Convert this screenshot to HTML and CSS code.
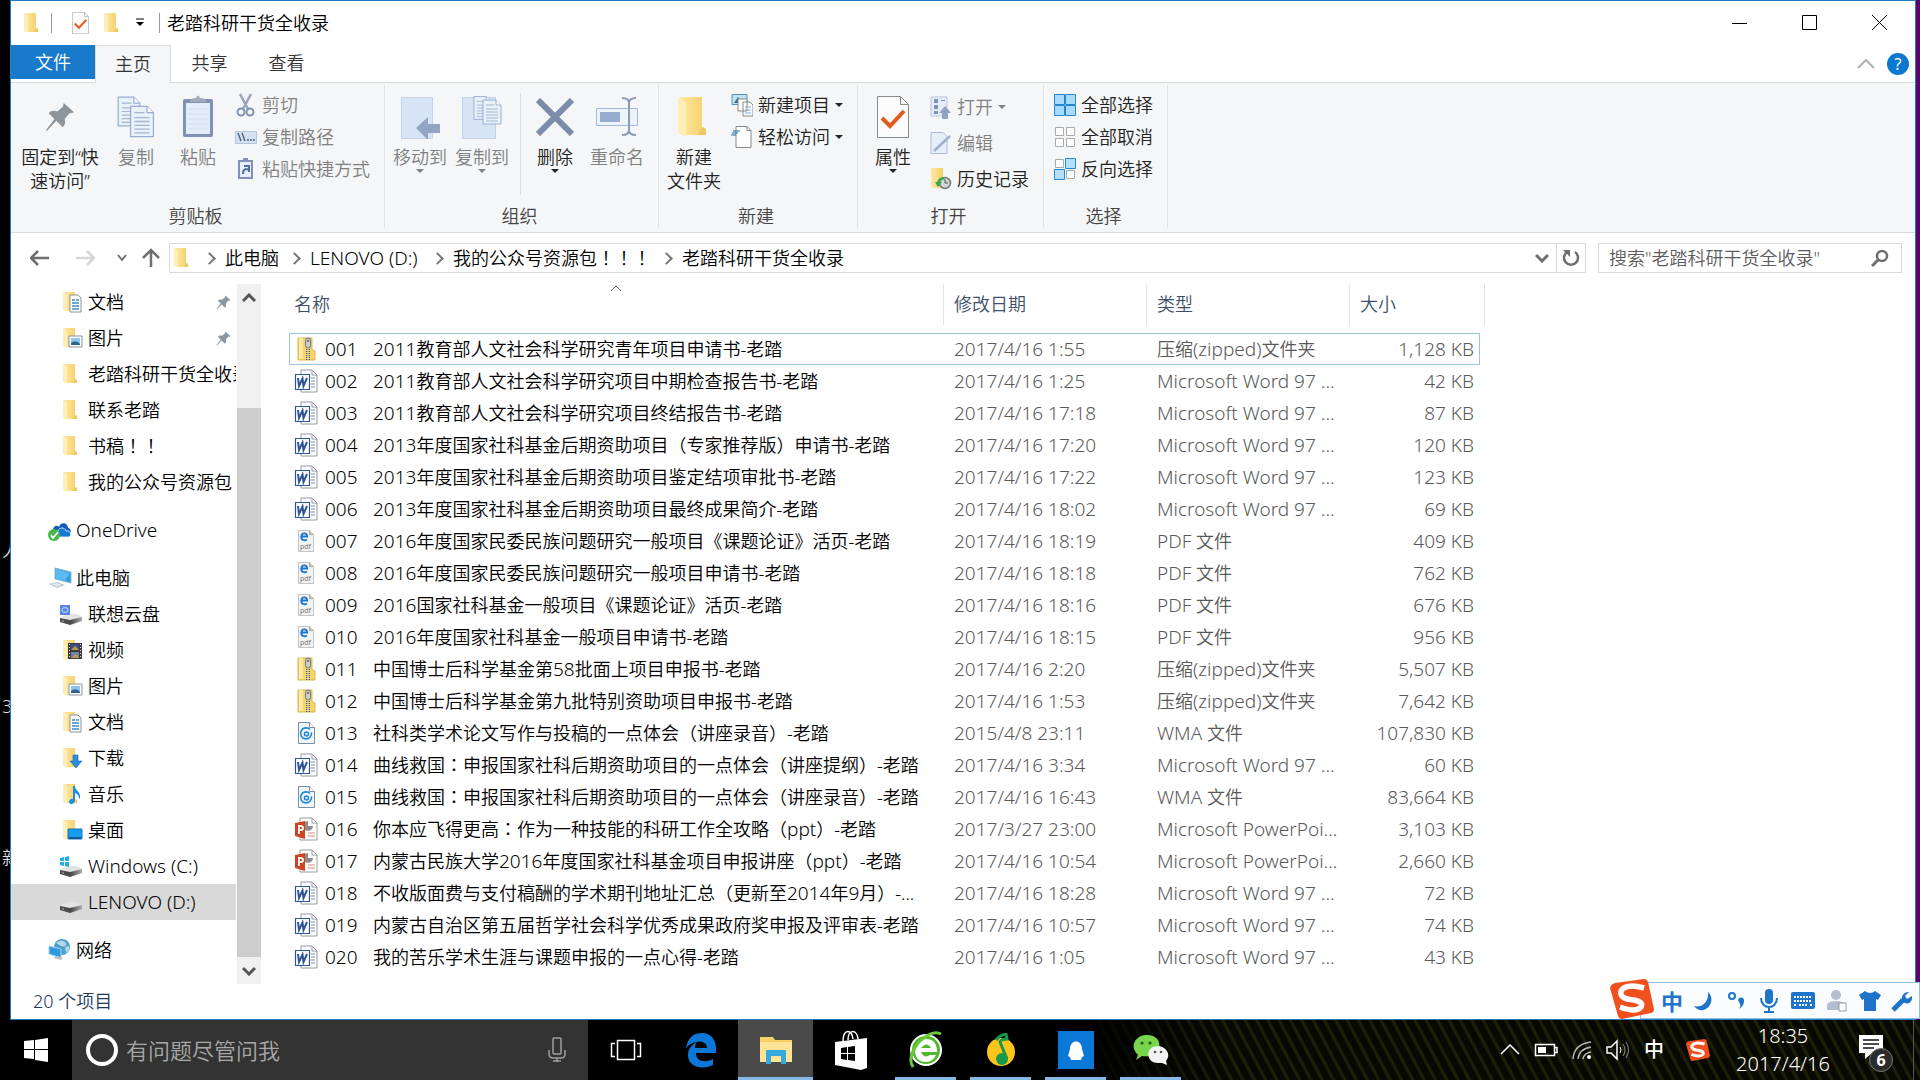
FILE: index.html
```html
<!DOCTYPE html>
<html lang="zh-CN">
<head>
  <meta charset="UTF-8" />
  <meta name="viewport" content="width=device-width, initial-scale=1.0" />
  <title>老踏科研干货全收录</title>
  <link rel="stylesheet" href="styles.css">
</head>
<body>
  <!-- Shared icons -->
  <svg class="defs" aria-hidden="true">
    <defs>
      <linearGradient id="gold" x1="0" x2="1"><stop offset="0" stop-color="#ffe9a6"/><stop offset="1" stop-color="#f5cf66"/></linearGradient>
      <linearGradient id="metal" x1="0" x2="1"><stop offset="0" stop-color="#444"/><stop offset="1" stop-color="#aaa"/></linearGradient>
    </defs>
    <symbol id="folder" viewBox="0 0 24 24">
      <path d="M5 2h11v15l2 1v3H7z" fill="url(#gold)"/>
      <path d="M4 2l4 3v17l-4-2z" fill="#ffeeb5"/>
      <path d="M16 17l2 1v3h-4z" fill="#efc95f"/>
    </symbol>
    <symbol id="folder-doc" viewBox="0 0 24 24">
      <use href="#folder"/>
      <path d="M11 5h8l3 3v14H11z" fill="#fff" stroke="#8a939b"/>
      <path d="M13 10h3M13 13h7M13 16h7M13 19h7M17 10h3" stroke="#3b8fc9" stroke-width="1.4"/>
    </symbol>
    <symbol id="folder-pic" viewBox="0 0 24 24">
      <use href="#folder"/>
      <path d="M10 10h13v11H10z" fill="#fff" stroke="#8a939b"/>
      <path d="M12 12h9v7h-9z" fill="#8cc4ef"/><path d="M12 17q5-4 9 1v1h-9z" fill="#2f6286"/>
    </symbol>
    <symbol id="folder-video" viewBox="0 0 24 24">
      <use href="#folder"/>
      <path d="M9 5h14v16H9z" fill="#3c3c40"/><path d="M12 6h8v6h-8z" fill="#36528c"/><path d="M12 14h8v6h-8z" fill="#6d86a8"/>
      <path d="M12 12l4-4 4 4zM12 20l5-4 3 4z" fill="#c7964c"/>
      <path d="M10.500 6v15M21.500 6v15" stroke="#ddd" stroke-dasharray="1 2"/>
    </symbol>
    <symbol id="folder-down" viewBox="0 0 24 24">
      <use href="#folder"/>
      <path d="M14 9h5v6h4l-6 7-6-7h3z" fill="#2d8ddb" stroke="#1b6bb0" stroke-width=".6"/>
    </symbol>
    <symbol id="folder-music" viewBox="0 0 24 24">
      <use href="#folder"/>
      <path d="M14 4h2c0 5 6 5 5 12l-1 1c0-4-2-5-4-6v7c0 5-6 5-6 2s3-4 4-3z" fill="#1e8fe0"/>
    </symbol>
    <symbol id="folder-desk" viewBox="0 0 24 24">
      <use href="#folder"/>
      <path d="M9 11h14v10H9z" fill="#1a9bf0" stroke="#1679bd"/><path d="M10 20h12" stroke="#0e4775" stroke-width="1.500"/>
    </symbol>
    <symbol id="drive" viewBox="0 0 24 24">
      <path d="M1 16l7-4h10l5 3-12 5z" fill="#e3e3e3"/>
      <path d="M1 16l10 2v5L1 20z" fill="#4c4c4c"/><path d="M11 18l12-3v4l-12 4z" fill="url(#metal)"/>
      <circle cx="4" cy="19" r=".8" fill="#9ae6a0"/>
    </symbol>
    <symbol id="drive-win" viewBox="0 0 24 24">
      <use href="#drive"/>
      <path d="M1 4l4-1v4H1zM6 3l4-1v5H6zM1 8h4v4l-4-1zM6 8h4v5l-4-1z" fill="#1fb0e8"/>
    </symbol>
    <symbol id="drive-cloud" viewBox="0 0 24 24">
      <use href="#drive"/>
      <path d="M1 3h10v10H1z" fill="#5686e8"/><path d="M3 8a2 2 0 0 1 3-2 2 2 0 0 1 3 2 2 2 0 0 1-3 2 2 2 0 0 1-3-2z" fill="none" stroke="#cfe0ff"/>
    </symbol>
    <symbol id="pc" viewBox="0 0 24 24">
      <path d="M7 2l16 4v11L7 13z" fill="#2e9be0" stroke="#8fb9d6"/><path d="M8 3l14 4-5 8-9-2z" fill="#5bb8f0"/>
      <path d="M1 18l8-2 8 3-8 3z" fill="#b9c3ca"/><path d="M3 18l6-1 5 2-5 2z" fill="#e4e9ec"/>
    </symbol>
    <symbol id="onedrive" viewBox="0 0 24 24">
      <path d="M6 14c-3-5 3-8 5-5 2-6 9-4 9 1 3 0 4 5 1 6H8z" fill="#0f5fb8"/>
      <path d="M9 18c-3-1-2-5 1-5 1-4 7-4 8 0 5-1 6 5 3 6H11z" fill="#1679d4" stroke="#fff" stroke-width=".8"/>
      <circle cx="6" cy="17" r="6" fill="#45b649"/><path d="M3 17l2 3 5-6" fill="none" stroke="#fff" stroke-width="1.800"/>
    </symbol>
    <symbol id="network" viewBox="0 0 24 24">
      <circle cx="14" cy="9" r="8" fill="#4f9fcc"/><path d="M8 5q6-5 10 0 1 5-5 3zM17 9l4-1q1 5-3 7z" fill="#b5d6e6"/>
      <path d="M1 8l12 3v9L1 16z" fill="#2e9be0" stroke="#a9d3ee"/><path d="M5 20l8 2 2-2-6-2z" fill="#b9c3ca"/>
    </symbol>
    <symbol id="zip" viewBox="0 0 24 24">
      <path d="M4 1h14v12l3 1v9H4z" fill="#f6d568" stroke="#dcb54a"/><path d="M5 1h4v21H5z" fill="#ffe9a6"/>
      <path d="M14 10v13" stroke="#555" stroke-width="4" stroke-dasharray="1 1"/><path d="M14 10v13" stroke="#eee" stroke-width="1"/>
      <rect x="11.500" y="1" width="5" height="10" rx="2.500" fill="#c8ced3" stroke="#6c7378"/><circle cx="14" cy="4" r="1" fill="#555"/>
    </symbol>
    <symbol id="word" viewBox="0 0 24 24">
      <path d="M7 1h11l5 5v17H7z" fill="#fff" stroke="#9099a5"/><path d="M18 1v5h5" fill="none" stroke="#9099a5"/>
      <path d="M17 9h4M17 12h4M17 15h4M17 18h4" stroke="#7889a8"/>
      <path d="M1.500 5.500h14v15h-14z" fill="#fff" stroke="#2b579a" stroke-width="1.200"/>
      <path d="M4 9l1 8 3.500-7.500 1 7.500L13 9" fill="none" stroke="#2b579a" stroke-width="2"/>
    </symbol>
    <symbol id="ppt" viewBox="0 0 24 24">
      <path d="M6 1h12l5 5v17H6z" fill="#fff" stroke="#9c9c9c"/><path d="M18 1v5h5" fill="none" stroke="#9c9c9c"/>
      <path d="M14 4v5h5a5 5 0 1 1-5-5z" fill="#8f8f8f"/><path d="M14 16h7M14 19h7" stroke="#e0846c"/>
      <path d="M1 6l10-2v18L1 19z" fill="#d04423"/><path d="M5 17V9h2a2 2 0 0 1 0 4H5" fill="none" stroke="#fff" stroke-width="1.800"/>
    </symbol>
    <symbol id="pdf" viewBox="0 0 24 24">
      <path d="M4.500 1.500h11l4 4v17h-15z" fill="#f3f3f3" stroke="#c4c4c4"/><path d="M15.500 1.500v4h4" fill="#ccc" stroke="#aaa"/>
      <path d="M7.500 7.500h5.500c0-4-4.500-4-5.500-1-1 4 2 6 5.500 4" fill="none" stroke="#1976d2" stroke-width="2"/>
      <text x="6" y="20" font-size="7" font-weight="400" font-family="Noto Sans" fill="#777">pdf</text>
    </symbol>
    <symbol id="wma" viewBox="0 0 24 24">
      <path d="M4.500 1.500h11l5 5v16h-16z" fill="#eff8ff" stroke="#7d8c98"/><path d="M15.500 1.500v5h5" fill="#fff" stroke="#7d8c98"/>
      <path d="M16 8.500a5.500 5.500 0 1 0 1.500 3" fill="none" stroke="#1e88d8" stroke-width="1.600"/><circle cx="12.500" cy="13" r="2" fill="none" stroke="#1e88d8" stroke-width="1.600"/>
    </symbol>
    <symbol id="pin" viewBox="0 0 32 32">
      <path d="M20 1l11 10-3 1-2 0-5 6c1 4 0 7-2 9l-7-7L2 31l-1-1L10 18 4 12c2-3 6-3 9-2l6-5z" fill="currentColor"/>
    </symbol>
    <symbol id="page" viewBox="0 0 20 26">
      <path d="M1 1h13l5 5v19H1z" fill="#e9f1fb" stroke="#97aed2"/><path d="M14 1v5h5" fill="#fff" stroke="#97aed2"/>
      <path d="M4 6h8M4 10h12M4 13h12M4 16h12M4 19h12M4 22h12" stroke="#a3b5d0"/>
    </symbol>
    <symbol id="checkdoc" viewBox="0 0 32 42">
      <path d="M.500.500h23l8 8v33H.500z" fill="#fcfcfc" stroke="#8b8b8b"/><path d="M23.500.500v8h8" fill="none" stroke="#8b8b8b"/>
      <path d="M5 22l8 8 14-15" fill="none" stroke="#e35b1c" stroke-width="4"/>
    </symbol>
    <symbol id="sogou" viewBox="0 0 44 40">
      <path d="M5 4L34 0q3 0 4 3l6 27q0 3-3 4l-29 6q-3 0-4-3L0 9q1-4 5-5z" fill="#f0501e"/>
      <path d="M34 9Q16 4 11 12q-2 8 13 9 10 2 7 7-5 6-21 0" fill="none" stroke="#fff" stroke-width="5.500"/>
    </symbol>
  </svg>

  <div class="desktop">
    <span class="desk-text desk-text-1">人</span>
    <span class="desk-text desk-text-2">3</span>
    <span class="desk-text desk-text-3">新</span>

    <div class="window">
      <!-- Title bar -->
      <header class="titlebar">
        <svg class="ico"><use href="#folder"/></svg>
        <span class="bar"></span>
        <button class="quick"><svg width="17" height="22"><use href="#checkdoc"/></svg></button>
        <button class="quick"><svg class="ico"><use href="#folder"/></svg></button>
        <button class="quick more"><svg width="10" height="10" viewBox="0 0 10 10"><path d="M1 1h8" stroke="#000"/><path d="M1 4h8L5 8z"/></svg></button>
        <span class="bar"></span>
        <span class="title">老踏科研干货全收录</span>
        <div class="win-buttons">
          <button aria-label="最小化"><svg width="16" height="16"><path d="M0 8.500h15" stroke="#000"/></svg></button>
          <button aria-label="最大化"><svg width="16" height="16"><path d="M.500.500h14v14H.500z" fill="none" stroke="#000"/></svg></button>
          <button aria-label="关闭"><svg width="16" height="16"><path d="M0 0l15 15M15 0L0 15" stroke="#000"/></svg></button>
        </div>
      </header>

      <!-- Ribbon tabs -->
      <nav class="tabs">
        <button class="tab file">文件</button>
        <button class="tab active">主页</button>
        <button class="tab">共享</button>
        <button class="tab">查看</button>
        <div class="tabs-end">
          <svg width="18" height="10"><path d="M1 9l8-8 8 8" fill="none" stroke="#b0b0b0" stroke-width="2"/></svg>
          <button class="help">?</button>
        </div>
      </nav>

      <!-- Ribbon -->
      <section class="ribbon">
        <div class="group g-clipboard">
          <div class="group-body">
            <button class="big pin-button"><span class="pic"><svg class="pin-big"><use href="#pin"/></svg></span>固定到“快<br>速访问”</button>
            <button class="big off"><span class="pic"><svg width="38" height="44"><use href="#page" width="24" height="33" y="0"/><use href="#page" x="12" y="10" width="26" height="33"/></svg></span>复制</button>
            <button class="big off"><span class="pic"><svg width="32" height="44" viewBox="0 0 32 44"><rect x="1" y="4" width="30" height="38" rx="2" fill="#7f92b5"/><path d="M4 8h24v31H4z" fill="#e3edfa"/><path d="M6 14h20M6 19h20M6 24h20M6 29h20M6 34h20" stroke="#d0deef"/><path d="M8 7q0-4 6-4 2-5 4 0 6 0 6 4z" fill="#a3abb8"/></svg></span>粘贴</button>
            <div class="smalls">
              <button class="off"><svg width="22" height="24" viewBox="0 0 22 24"><path d="M5 1l8 15M16 1L8 16" stroke="#99a5b8" stroke-width="2.500"/><circle cx="6" cy="19" r="3.500" fill="none" stroke="#7f92b0" stroke-width="2"/><circle cx="15" cy="19" r="3.500" fill="none" stroke="#7f92b0" stroke-width="2"/></svg>剪切</button>
              <button class="off"><svg width="22" height="24" viewBox="0 0 22 24"><path d="M.500 6.500h21v12H.500z" fill="#d5e1f2" stroke="#b4c5de"/><path d="M3 8l3 8M7 8l3 8M12 15h2M15 15h2M18 15h2" stroke="#4d6180" stroke-width="1.400"/></svg>复制路径</button>
              <button class="off"><svg width="22" height="24" viewBox="0 0 22 24"><path d="M4 4h13v17H4z" fill="#e7effa" stroke="#8093b6" stroke-width="2"/><path d="M8 1h5v4H8z" fill="#8093b6"/><path d="M8 17c0-4 1-5 5-5M9 9h5v6" fill="none" stroke="#4f6d9d" stroke-width="2"/></svg>粘贴快捷方式</button>
            </div>
          </div>
          <div class="group-name">剪贴板</div>
        </div>

        <div class="group g-organize">
          <div class="group-body">
            <button class="big off"><span class="pic"><svg width="40" height="44"><path d="M1.500 2.500h31v41h-31z" fill="#d7e4f6" stroke="#c0d2ec"/><path d="M16 33l12-11v7h12v9H28v7z" fill="#93a5c2"/></svg></span>移动到<i class="drop"></i></button>
            <button class="big off"><span class="pic"><svg width="42" height="44"><path d="M1.500 2.500h33v41h-33z" fill="#d7e4f6" stroke="#c0d2ec"/><use href="#page" x="12" width="19" height="26"/><use href="#page" x="21" y="4" width="20" height="26"/></svg></span>复制到<i class="drop"></i></button>
            <span class="divider"></span>
            <button class="big"><span class="pic"><svg width="38" height="38"><path d="M2 2l34 34M36 2L2 36" stroke="#7b8cab" stroke-width="6"/></svg></span>删除<i class="drop"></i></button>
            <button class="big off"><span class="pic"><svg width="42" height="40"><path d="M.500 11.500h41v17H.500z" fill="#edf3fb" stroke="#a3b8da"/><path d="M4 15h20v10H4z" fill="#98acd0"/><path d="M26 1q7 0 7 5v27q0 5-7 5M40 1q-7 0-7 5v27q0 5 7 5" fill="none" stroke="#8b9bb4" stroke-width="2"/></svg></span>重命名</button>
          </div>
          <div class="group-name">组织</div>
        </div>

        <div class="group g-new">
          <div class="group-body">
            <button class="big"><span class="pic"><svg width="48" height="48"><use href="#folder"/></svg></span>新建<br>文件夹</button>
            <div class="smalls">
              <button><svg width="22" height="24" viewBox="0 0 22 24"><path d="M1 1.500h15v10H1z" fill="#bfe2f5" stroke="#5791ad"/><path d="M3 10l4-6 3 6z" fill="#35718f"/><path d="M7 6h9v12H7zM12 9h7l3 3v11H12z" fill="#fff" stroke="#888"/><path d="M14 14h6M14 17h6M14 20h6" stroke="#7fa7c8"/></svg>新建项目<i class="drop"></i></button>
              <button><svg width="22" height="24" viewBox="0 0 22 24"><path d="M5 1.500h11l4 4v17H5z" fill="#fff" stroke="#888"/><path d="M16 1.500v4h4" fill="none" stroke="#888"/><path d="M2 6h7M1 8h6M0 10h5" stroke="#1769b3"/></svg>轻松访问<i class="drop"></i></button>
            </div>
          </div>
          <div class="group-name">新建</div>
        </div>

        <div class="group g-open">
          <div class="group-body">
            <button class="big"><span class="pic"><svg width="32" height="42"><use href="#checkdoc"/></svg></span>属性<i class="drop"></i></button>
            <div class="smalls loose">
              <button class="off"><svg width="22" height="24" viewBox="0 0 22 24"><path d="M1 2h16v19H1z" fill="#e3ecf8" stroke="#b5c5de"/><path d="M4 4h4v4H4zM4 10h4v4H4zM4 16h4v3H4zM11 5h4v1h-4z" fill="#7c92b8"/><path d="M15 11l6 7h-3v6h-6v-6H9z" fill="#8fa2c2"/></svg>打开<i class="drop"></i></button>
              <button class="off"><svg width="22" height="24" viewBox="0 0 22 24"><path d="M1 1.500h12l4 4v17H1z" fill="#e6eef9" stroke="#a9bad8"/><path d="M4 20L20 5" stroke="#9fb0cc" stroke-width="2.500"/></svg>编辑</button>
              <button><svg width="22" height="24" viewBox="0 0 22 24"><path d="M1 1h12v20H4l-3-1z" fill="url(#gold)"/><circle cx="15" cy="16" r="5.500" fill="#d2d6d8" stroke="#777" stroke-width="1.500"/><path d="M15 12v4h3" fill="none" stroke="#555"/><path d="M8 19c0-7 3-7 6-8" fill="none" stroke="#3aa54a" stroke-width="2.500"/><path d="M5 15h7l-4 5z" fill="#3aa54a"/></svg>历史记录</button>
            </div>
          </div>
          <div class="group-name">打开</div>
        </div>

        <div class="group g-select">
          <div class="group-body">
            <div class="smalls">
              <button><svg width="22" height="24" viewBox="0 0 22 24"><path d="M.500 1.500h10v10H.500zM11.500 1.500h10v10h-10zM.500 12.500h10v10H.500zM11.500 12.500h10v10h-10z" fill="#a8dbfb" stroke="#2687cf"/></svg>全部选择</button>
              <button><svg width="22" height="24" viewBox="0 0 22 24"><path d="M1.500 2.500h8v8h-8zM12.500 2.500h8v8h-8zM1.500 13.500h8v8h-8zM12.500 13.500h8v8h-8z" fill="#fff" stroke="#aaa"/></svg>全部取消</button>
              <button><svg width="22" height="24" viewBox="0 0 22 24"><path d="M1.500 2.500h8v8h-8zM12.500 13.500h8v8h-8z" fill="#fff" stroke="#aaa"/><path d="M11.500 1.500h10v10h-10zM.500 12.500h10v10H.500z" fill="#b5e0fb" stroke="#2687cf"/></svg>反向选择</button>
            </div>
          </div>
          <div class="group-name">选择</div>
        </div>
      </section>

      <!-- Address bar -->
      <div class="address-row">
        <div class="history">
          <button aria-label="后退"><svg width="20" height="16"><path d="M1 8h18M8 1L1 8l7 7" fill="none" stroke="#6e6e6e" stroke-width="2.500"/></svg></button>
          <button aria-label="前进"><svg width="20" height="16"><path d="M1 8h18M12 1l7 7-7 7" fill="none" stroke="#d6d6d6" stroke-width="2.500"/></svg></button>
          <button class="narrow" aria-label="最近"><svg width="10" height="8"><path d="M1 1l4 5 4-5" fill="none" stroke="#6e6e6e" stroke-width="2"/></svg></button>
          <button class="narrow" aria-label="向上"><svg width="18" height="20"><path d="M9 19V2M1 10l8-8 8 8" fill="none" stroke="#6e6e6e" stroke-width="2.500"/></svg></button>
        </div>
        <div class="address">
          <svg class="ico"><use href="#folder"/></svg>
          <span class="crumb-sep"></span><a href="#pc">此电脑</a>
          <span class="crumb-sep"></span><a class="crumb-latin" href="#d">LENOVO (D:)</a>
          <span class="crumb-sep"></span><a href="#res">我的公众号资源包<span class="mid" lang="zh-TW">！！！</span></a>
          <span class="crumb-sep"></span><a href="#all">老踏科研干货全收录</a>
          <button class="addr-drop" aria-label="展开"><svg width="14" height="10"><path d="M1 2l6 6 6-6" fill="none" stroke="#6e6e6e" stroke-width="3"/></svg></button>
          <button class="refresh" aria-label="刷新"><svg width="18" height="18"><path d="M5 3a7 7 0 1 0 8 0" fill="none" stroke="#6e6e6e" stroke-width="2.500"/><path d="M1 1h7v7z" fill="#6e6e6e"/></svg></button>
        </div>
        <label class="search">
          <input type="text" placeholder="搜索&quot;老踏科研干货全收录&quot;" aria-label="搜索">
          <svg width="18" height="18"><circle cx="11" cy="7" r="5" fill="none" stroke="#6e6e6e" stroke-width="2.500"/><path d="M7 11l-6 6" stroke="#6e6e6e" stroke-width="3"/></svg>
        </label>
      </div>

      <div class="content">
        <!-- Navigation pane -->
        <aside class="tree">
          <a class="leaf" href="#"><svg class="ico"><use href="#folder-doc"/></svg>文档<svg class="pin-small"><use href="#pin"/></svg></a>
          <a class="leaf" href="#"><svg class="ico"><use href="#folder-pic"/></svg>图片<svg class="pin-small"><use href="#pin"/></svg></a>
          <a class="leaf" href="#"><svg class="ico"><use href="#folder"/></svg>老踏科研干货全收录</a>
          <a class="leaf" href="#"><svg class="ico"><use href="#folder"/></svg>联系老踏</a>
          <a class="leaf" href="#"><svg class="ico"><use href="#folder"/></svg><span>书稿<span class="mid" lang="zh-TW">！！</span></span></a>
          <a class="leaf" href="#"><svg class="ico"><use href="#folder"/></svg>我的公众号资源包</a>
          <a class="root latin" href="#"><svg class="ico"><use href="#onedrive"/></svg>OneDrive</a>
          <a class="root" href="#"><svg class="ico"><use href="#pc"/></svg>此电脑</a>
          <a class="leaf" href="#"><svg class="ico"><use href="#drive-cloud"/></svg>联想云盘</a>
          <a class="leaf" href="#"><svg class="ico"><use href="#folder-video"/></svg>视频</a>
          <a class="leaf" href="#"><svg class="ico"><use href="#folder-pic"/></svg>图片</a>
          <a class="leaf" href="#"><svg class="ico"><use href="#folder-doc"/></svg>文档</a>
          <a class="leaf" href="#"><svg class="ico"><use href="#folder-down"/></svg>下载</a>
          <a class="leaf" href="#"><svg class="ico"><use href="#folder-music"/></svg>音乐</a>
          <a class="leaf" href="#"><svg class="ico"><use href="#folder-desk"/></svg>桌面</a>
          <a class="leaf latin" href="#"><svg class="ico"><use href="#drive-win"/></svg>Windows (C:)</a>
          <a class="leaf latin selected" href="#"><svg class="ico"><use href="#drive"/></svg>LENOVO (D:)</a>
          <a class="root" href="#"><svg class="ico"><use href="#network"/></svg>网络</a>
        </aside>
        <div class="scrollbar">
          <button aria-label="向上滚动"><svg width="14" height="10"><path d="M1 8l6-6 6 6" fill="none" stroke="#555" stroke-width="3"/></svg></button>
          <div class="track"><div class="thumb"></div></div>
          <button aria-label="向下滚动"><svg width="14" height="10"><path d="M1 2l6 6 6-6" fill="none" stroke="#555" stroke-width="3"/></svg></button>
        </div>

        <!-- File list -->
        <main class="files">
          <table>
            <colgroup><col class="c-name"><col class="c-date"><col class="c-type"><col class="c-size"></colgroup>
            <thead>
              <tr>
                <th>名称<svg class="sort" width="12" height="7"><path d="M1 6l5-5 5 5" fill="none" stroke="#777"/></svg></th>
                <th>修改日期</th><th>类型</th><th>大小</th>
              </tr>
            </thead>
            <tbody>
              <tr class="focused"><td><svg class="ico"><use href="#zip"/></svg><span class="no">001</span><span><span class="latin">2011</span>教育部人文社会科学研究青年项目申请书-老踏</span></td><td>2017/4/16 1:55</td><td>压缩<span class="latin">(zipped)</span>文件夹</td><td>1,128 KB</td></tr>
              <tr><td><svg class="ico"><use href="#word"/></svg><span class="no">002</span><span><span class="latin">2011</span>教育部人文社会科学研究项目中期检查报告书-老踏</span></td><td>2017/4/16 1:25</td><td class="latin">Microsoft Word 97 ...</td><td>42 KB</td></tr>
              <tr><td><svg class="ico"><use href="#word"/></svg><span class="no">003</span><span><span class="latin">2011</span>教育部人文社会科学研究项目终结报告书-老踏</span></td><td>2017/4/16 17:18</td><td class="latin">Microsoft Word 97 ...</td><td>87 KB</td></tr>
              <tr><td><svg class="ico"><use href="#word"/></svg><span class="no">004</span><span><span class="latin">2013</span>年度国家社科基金后期资助项目（专家推荐版）申请书-老踏</span></td><td>2017/4/16 17:20</td><td class="latin">Microsoft Word 97 ...</td><td>120 KB</td></tr>
              <tr><td><svg class="ico"><use href="#word"/></svg><span class="no">005</span><span><span class="latin">2013</span>年度国家社科基金后期资助项目鉴定结项审批书-老踏</span></td><td>2017/4/16 17:22</td><td class="latin">Microsoft Word 97 ...</td><td>123 KB</td></tr>
              <tr><td><svg class="ico"><use href="#word"/></svg><span class="no">006</span><span><span class="latin">2013</span>年度国家社科基金后期资助项目最终成果简介-老踏</span></td><td>2017/4/16 18:02</td><td class="latin">Microsoft Word 97 ...</td><td>69 KB</td></tr>
              <tr><td><svg class="ico"><use href="#pdf"/></svg><span class="no">007</span><span><span class="latin">2016</span>年度国家民委民族问题研究一般项目《课题论证》活页-老踏</span></td><td>2017/4/16 18:19</td><td><span class="latin">PDF</span> 文件</td><td>409 KB</td></tr>
              <tr><td><svg class="ico"><use href="#pdf"/></svg><span class="no">008</span><span><span class="latin">2016</span>年度国家民委民族问题研究一般项目申请书-老踏</span></td><td>2017/4/16 18:18</td><td><span class="latin">PDF</span> 文件</td><td>762 KB</td></tr>
              <tr><td><svg class="ico"><use href="#pdf"/></svg><span class="no">009</span><span><span class="latin">2016</span>国家社科基金一般项目《课题论证》活页-老踏</span></td><td>2017/4/16 18:16</td><td><span class="latin">PDF</span> 文件</td><td>676 KB</td></tr>
              <tr><td><svg class="ico"><use href="#pdf"/></svg><span class="no">010</span><span><span class="latin">2016</span>年度国家社科基金一般项目申请书-老踏</span></td><td>2017/4/16 18:15</td><td><span class="latin">PDF</span> 文件</td><td>956 KB</td></tr>
              <tr><td><svg class="ico"><use href="#zip"/></svg><span class="no">011</span><span>中国博士后科学基金第<span class="latin">58</span>批面上项目申报书-老踏</span></td><td>2017/4/16 2:20</td><td>压缩<span class="latin">(zipped)</span>文件夹</td><td>5,507 KB</td></tr>
              <tr><td><svg class="ico"><use href="#zip"/></svg><span class="no">012</span><span>中国博士后科学基金第九批特别资助项目申报书-老踏</span></td><td>2017/4/16 1:53</td><td>压缩<span class="latin">(zipped)</span>文件夹</td><td>7,642 KB</td></tr>
              <tr><td><svg class="ico"><use href="#wma"/></svg><span class="no">013</span><span>社科类学术论文写作与投稿的一点体会（讲座录音）-老踏</span></td><td>2015/4/8 23:11</td><td><span class="latin">WMA</span> 文件</td><td>107,830 KB</td></tr>
              <tr><td><svg class="ico"><use href="#word"/></svg><span class="no">014</span><span>曲线救国<span class="mid" lang="zh-TW">：</span>申报国家社科后期资助项目的一点体会（讲座提纲）-老踏</span></td><td>2017/4/16 3:34</td><td class="latin">Microsoft Word 97 ...</td><td>60 KB</td></tr>
              <tr><td><svg class="ico"><use href="#wma"/></svg><span class="no">015</span><span>曲线救国<span class="mid" lang="zh-TW">：</span>申报国家社科后期资助项目的一点体会（讲座录音）-老踏</span></td><td>2017/4/16 16:43</td><td><span class="latin">WMA</span> 文件</td><td>83,664 KB</td></tr>
              <tr><td><svg class="ico"><use href="#ppt"/></svg><span class="no">016</span><span>你本应飞得更高<span class="mid" lang="zh-TW">：</span>作为一种技能的科研工作全攻略（<span class="latin">ppt</span>）-老踏</span></td><td>2017/3/27 23:00</td><td class="latin">Microsoft PowerPoi...</td><td>3,103 KB</td></tr>
              <tr><td><svg class="ico"><use href="#ppt"/></svg><span class="no">017</span><span>内蒙古民族大学<span class="latin">2016</span>年度国家社科基金项目申报讲座（<span class="latin">ppt</span>）-老踏</span></td><td>2017/4/16 10:54</td><td class="latin">Microsoft PowerPoi...</td><td>2,660 KB</td></tr>
              <tr><td><svg class="ico"><use href="#word"/></svg><span class="no">018</span><span>不收版面费与支付稿酬的学术期刊地址汇总（更新至<span class="latin">2014</span>年<span class="latin">9</span>月）-...</span></td><td>2017/4/16 18:28</td><td class="latin">Microsoft Word 97 ...</td><td>72 KB</td></tr>
              <tr><td><svg class="ico"><use href="#word"/></svg><span class="no">019</span><span>内蒙古自治区第五届哲学社会科学优秀成果政府奖申报及评审表-老踏</span></td><td>2017/4/16 10:57</td><td class="latin">Microsoft Word 97 ...</td><td>74 KB</td></tr>
              <tr><td><svg class="ico"><use href="#word"/></svg><span class="no">020</span><span>我的苦乐学术生涯与课题申报的一点心得-老踏</span></td><td>2017/4/16 1:05</td><td class="latin">Microsoft Word 97 ...</td><td>43 KB</td></tr>
            </tbody>
          </table>
        </main>
      </div>

      <footer class="status">20 个项目</footer>
    </div>

    <!-- Floating input method bar -->
    <div class="ime">
      <svg class="ime-logo" width="44" height="40"><use href="#sogou"/></svg>
      <div class="ime-tools">
        <span class="ime-zh">中</span>
        <svg width="22" height="22" viewBox="0 0 22 22"><path d="M15 2c10 9-4 26-14 14 8 2 15-4 14-14z" fill="#1d74c8"/></svg>
        <svg width="22" height="22" viewBox="0 0 22 22"><circle cx="6" cy="6" r="3" fill="none" stroke="#1d74c8" stroke-width="2"/><path d="M12 10a3 3 0 1 1 6 1c0 4-2 6-5 8 1-2 2-3 1-5z" fill="#1d74c8"/></svg>
        <svg width="22" height="26" viewBox="0 0 22 26"><rect x="7" y="1" width="8" height="15" rx="4" fill="#1d74c8"/><path d="M3 10c0 12 16 12 16 0M11 19v5M6 24h10" fill="none" stroke="#1d74c8" stroke-width="2"/></svg>
        <svg width="26" height="20" viewBox="0 0 26 20"><rect x="1" y="1" width="24" height="17" rx="2" fill="#1d74c8"/><path d="M4 6h18M4 10h18M4 14h3M9 14h9M20 14h3" stroke="#fff" stroke-width="2" stroke-dasharray="2 1"/></svg>
        <svg width="22" height="24" viewBox="0 0 22 24"><circle cx="10" cy="6" r="5" fill="#b3bed0"/><path d="M1 21V16q1-4 9-4t9 4v5z" fill="#b3bed0"/><path d="M13 14h7v8h-7z" fill="#fff" stroke="#999"/></svg>
        <svg width="22" height="22" viewBox="0 0 22 22"><path d="M6 1q5 4 10 0l6 4-3 5-2-1v12H5V9l-2 1-3-5z" fill="#1d74c8"/></svg>
        <svg width="22" height="22" viewBox="0 0 22 22"><path d="M2 20L12 10" stroke="#1d74c8" stroke-width="5"/><path d="M18 2l-4 4 2 3 5-3c1 5-3 9-7 7-6-2-3-12 4-11z" fill="#1d74c8"/></svg>
      </div>
    </div>
  </div>

  <!-- Taskbar -->
  <div class="taskbar">
    <button class="start" aria-label="开始"><svg width="26" height="26" viewBox="0 0 26 26"><path d="M1 4l10-1v9H1zM12 3l13-2v11H12zM1 13h10v9l-10-1zM12 13h13v12l-13-2z" fill="#fff"/></svg></button>
    <label class="cortana">
      <svg width="34" height="36"><circle cx="17" cy="18" r="14" fill="none" stroke="#fff" stroke-width="4"/></svg>
      <input type="text" placeholder="有问题尽管问我" aria-label="搜索">
      <svg width="18" height="26"><rect x="5" y="1" width="8" height="16" rx="1" fill="none" stroke="#a0a0a0" stroke-width="1.500"/><path d="M1 13v4q0 4 4 4h8q4 0 4-4v-4M9 21v4M5 24h8" fill="none" stroke="#a0a0a0" stroke-width="1.500"/></svg>
    </label>
    <div class="apps">
      <button class="app"><svg width="32" height="22"><path d="M7.500 1.500h17v19h-17zM5 4.500H1.500v13H5M27 4.500h3.500v13H27" fill="none" stroke="#fff" stroke-width="1.500"/></svg></button>
      <button class="app"><svg width="32" height="36" viewBox="0 0 32 36"><path d="M1 16C3 5 9 1 17 1c9 0 14 7 14 15v5H11c0 9 10 10 17 6v6c-9 5-25 3-25-10 0-7 5-11 9-13-2 2-2 5-2 6h12c0-8-13-9-21 0z" fill="#0b78d7"/></svg></button>
      <button class="app current"><svg width="34" height="30" viewBox="0 0 34 30"><path d="M1 2h13l2 3h17v22H1z" fill="#f6cf66"/><path d="M1 7h32v20H1z" fill="#ffe394"/><path d="M7 15h20v14h-5v-8H12v8H7z" fill="#38a9de"/></svg></button>
      <button class="app"><svg width="34" height="40" viewBox="0 0 34 40"><path d="M9 12C9-2 18-1 19 9M14 10c0-11 9-11 10-1" fill="none" stroke="#fff" stroke-width="1.500"/><path d="M1 12l32-4v30l-6 2L1 35z" fill="#fff"/><path d="M7 18l6-1v6H7zM14 17l7-1v7h-7zM7 24h6v6l-6-1zM14 24h7v7l-7-1z" fill="#000"/></svg></button>
      <button class="app open"><svg width="36" height="40" viewBox="0 0 36 40"><circle cx="18" cy="20" r="16" fill="#fff"/><circle cx="18" cy="20" r="14" fill="#50b82d"/><path d="M29 22H13q3 7 9 3h6q-3 7-10 7-11 0-11-12 1-10 11-11 11 0 11 13zM13 18h10q-4-7-10 0z" fill="#fff"/><path d="M33 4Q24-1 10 13-1 28 5 37" fill="none" stroke="#69c83b" stroke-width="3"/></svg></button>
      <button class="app open"><svg width="30" height="34" viewBox="0 0 30 34"><circle cx="15" cy="19" r="14" fill="#fdc51a"/><path d="M10 7Q14 2 20 1l1 5q-6 0-7 3l7 17" fill="none" stroke="#18984b" stroke-width="3"/><circle cx="16" cy="26" r="6" fill="#18984b"/></svg></button>
      <button class="app open"><svg width="36" height="38"><path d="M0 0h36v38H0z" fill="#0a78d7"/><path d="M12 18c0-10 12-10 12 0l2 7-2 1-1 3H13l-1-3-2-1z" fill="#fff"/></svg></button>
      <button class="app open"><svg width="36" height="32" viewBox="0 0 36 32"><path d="M3 26l2-5C-6 10 6 0 14 1c9 0 14 6 12 13-2 8-11 9-17 8z" fill="#79d54b"/><circle cx="9" cy="9" r="1.600" fill="#245c16"/><circle cx="17" cy="9" r="1.600" fill="#245c16"/><path d="M34 31l-1-4c6-7-1-15-8-15-13 0-13 17 0 17h4z" fill="#f3f3f3"/><circle cx="22" cy="18" r="1.300" fill="#555"/><circle cx="28" cy="18" r="1.300" fill="#555"/></svg></button>
    </div>
    <div class="tray">
      <svg width="36" height="22"><path d="M9 15l9-9 9 9" fill="none" stroke="#fff" stroke-width="1.500"/></svg>
      <svg width="36" height="22"><path d="M7.500 5.500h19v11h-19zM27 8.500h2v5h-2" fill="none" stroke="#fff" stroke-width="1.500"/><path d="M10 8h8v6h-8z" fill="#fff"/></svg>
      <svg width="36" height="22"><path d="M9 20Q10 5 27 3M14 20q1-10 13-12M19 20q1-6 8-7" fill="none" stroke="#b8b8b8" stroke-width="1.500"/><circle cx="25" cy="18" r="2" fill="#fff"/></svg>
      <svg width="36" height="22"><path d="M7 8h4l6-6v18l-6-6H7z" fill="none" stroke="#fff" stroke-width="1.500"/><path d="M20 8q2 3 0 6" fill="none" stroke="#fff"/><path d="M23 5q4 6 0 12M26 3q5 8 0 16" fill="none" stroke="#888"/></svg>
      <span class="tray-zh">中</span>
      <svg class="tray-sogou" width="24" height="22"><use href="#sogou"/></svg>
      <div class="clock"><span>18:35</span><span>2017/4/16</span></div>
      <button class="notice" aria-label="通知"><svg width="26" height="26"><path d="M1 1h24v18H14l-7 6v-6H1z" fill="#fff"/><path d="M5 6h16M5 10h16M5 14h11" stroke="#111" stroke-width="1.500"/></svg><span class="count">6</span></button>
    </div>
  </div>
</body>
</html>
```

FILE: styles.css
```css
* {
  box-sizing: border-box;
}
body {
  margin: 0;
  min-height: 100vh;
  display: flex;
  flex-direction: column;
  background: #000;
  font-family: "Noto Sans", "Noto Sans CJK SC", sans-serif;
  font-size: 18px;
  font-weight: 350;
  line-height: 24px;
  color: #000;
}
button {
  font: inherit;
  color: inherit;
  background: none;
  border: 0;
  padding: 0;
  margin: 0;
}
a {
  color: inherit;
  text-decoration: none;
}
svg {
  flex: none;
  display: block;
}
input {
  font: inherit;
  border: 0;
  padding: 0;
  background: none;
  min-width: 0;
  flex: 1;
  outline: none;
}
.defs {
  position: absolute;
  width: 0;
  height: 0;
}
.ico {
  width: 24px;
  height: 24px;
}
.latin {
  font-size: 19px;
}
/* punctuation centred in its square */
.mid {
  font-family: "Noto Sans CJK TC", sans-serif;
  line-height: 20px;
}

/* Desktop behind the window */
.desktop {
  position: relative;
  flex: 1;
  display: flex;
  padding: 0 4px 0 10px;
  background: linear-gradient(90deg, #000 50%, #5c0070 50%);
}
.desk-text {
  position: absolute;
  left: 2px;
  color: #ddd;
}
.desk-text-1 { top: 538px; }
.desk-text-2 { top: 694px; }
.desk-text-3 { top: 846px; }

.window {
  position: relative;
  flex: 1;
  min-width: 0;
  display: flex;
  flex-direction: column;
  background: #fff;
  border: 1px solid #1f7fc4;
}

/* Title bar */
.titlebar {
  height: 44px;
  display: flex;
  align-items: center;
  padding-left: 9px;
}
.bar {
  width: 1px;
  height: 20px;
  margin: 0 7px;
  background: #999;
}
.quick {
  width: 32px;
  display: flex;
  justify-content: center;
}
.quick.more {
  width: 24px;
}
.titlebar .ico + .bar {
  margin-right: 12px;
}
.win-buttons {
  margin-left: auto;
  display: flex;
}
.win-buttons button {
  width: 70px;
  height: 44px;
  display: flex;
  align-items: center;
  justify-content: center;
}

/* Tabs */
.tabs {
  height: 38px;
  display: flex;
  border-bottom: 1px solid #dadbdc;
}
.tab {
  width: 77px;
  height: 36px;
  color: #333;
}
.tab.file {
  width: 84px;
  height: 34px;
  background: #1979ca;
  color: #fff;
}
.tab.active {
  width: 76px;
  height: 38px;
  padding-bottom: 2px;
  background: #f5f6f7;
  border: 1px solid #dadbdc;
  border-bottom: 0;
}
.tabs-end {
  margin-left: auto;
  display: flex;
  align-items: center;
  gap: 12px;
  padding-right: 6px;
}
.help {
  width: 22px;
  height: 22px;
  border-radius: 50%;
  background: #0b78d0;
  color: #fff;
  font-size: 16px;
  font-weight: 400;
  line-height: 22px;
}

/* Ribbon */
.ribbon {
  display: flex;
  height: 150px;
  padding: 2px 0 4px;
  background: #f5f6f7;
  border-bottom: 1px solid #dadbdc;
}
.group {
  display: flex;
  flex-direction: column;
  justify-content: space-between;
  padding-left: 4px;
  border-right: 1px solid #e2e3e4;
}
.g-clipboard { width: 374px; }
.g-organize { width: 274px; }
.g-new { width: 199px; }
.g-open { width: 186px; }
.g-select { width: 124px; }
.group-body {
  display: flex;
}
.group-name {
  padding-right: 8px;
  color: #444;
  text-align: center;
}
.big {
  width: 62px;
  display: flex;
  flex-direction: column;
  align-items: center;
  color: #222;
  white-space: nowrap;
}
.big.pin-button {
  width: 90px;
}
.pic {
  height: 60px;
  padding-top: 4px;
  display: flex;
  align-items: center;
}
.pin-big {
  width: 30px;
  height: 30px;
  color: #8c959b;
}
.off {
  color: #808080;
}
.drop {
  border: 4px solid transparent;
  border-top-color: currentColor;
  border-bottom: 0;
  flex: none;
}
.smalls {
  display: flex;
  flex-direction: column;
  gap: 8px;
  padding: 8px 0 0 6px;
}
.smalls.loose {
  gap: 12px;
  padding-top: 10px;
}
.smalls button {
  display: flex;
  align-items: center;
  gap: 5px;
  white-space: nowrap;
}
.smalls button:not(.off) {
  color: #222;
}
.divider {
  width: 1px;
  height: 102px;
  margin: 8px 3px 0 7px;
  background: #dcdddf;
}

/* Address bar */
.address-row {
  display: flex;
  align-items: center;
  height: 50px;
  margin-bottom: 1px;
  padding-right: 13px;
}
.history {
  width: 158px;
  display: flex;
  padding-left: 6px;
}
.history button {
  width: 45px;
  display: flex;
  align-items: center;
  justify-content: center;
}
.history .narrow {
  width: 29px;
}
.address {
  flex: 1;
  height: 30px;
  display: flex;
  align-items: center;
  border: 1px solid #d9d9d9;
  white-space: nowrap;
}
.crumb-latin {
  width: 112px;
  font-size: 19px;
}
.crumb-sep {
  width: 31px;
  display: flex;
  justify-content: center;
}
.crumb-sep::before {
  content: "";
  width: 7px;
  height: 7px;
  border: solid #777;
  border-width: 2px 2px 0 0;
  transform: rotate(45deg);
}
.addr-drop {
  margin-left: auto;
  width: 28px;
  display: flex;
  justify-content: center;
}
.refresh {
  width: 29px;
  height: 28px;
  border-left: 1px solid #d9d9d9;
  display: flex;
  align-items: center;
  justify-content: center;
}
.search {
  width: 304px;
  height: 30px;
  margin-left: 12px;
  padding: 0 12px 0 10px;
  display: flex;
  align-items: center;
  border: 1px solid #d9d9d9;
}
.search input::placeholder {
  color: #5c5c5c;
}

/* Navigation pane */
.content {
  flex: 1;
  display: flex;
}
.tree {
  width: 225px;
  overflow: hidden;
  display: flex;
  flex-direction: column;
}
.tree a {
  height: 36px;
  display: flex;
  align-items: center;
  white-space: nowrap;
}
.tree .leaf {
  padding-left: 48px;
  gap: 5px;
}
.tree .root {
  padding-left: 37px;
  gap: 4px;
  margin-top: 12px;
}
.tree .selected {
  background: #d9d9d9;
}
.pin-small {
  width: 15px;
  height: 15px;
  margin-left: auto;
  margin-right: 5px;
  color: #8c979f;
}
.scrollbar {
  width: 24px;
  margin-left: 1px;
  display: flex;
  flex-direction: column;
  background: #f0f0f0;
}
.scrollbar button {
  height: 27px;
  display: flex;
  align-items: center;
  justify-content: center;
}
.track {
  flex: 1;
  display: flex;
  flex-direction: column;
  justify-content: flex-end;
}
.thumb {
  height: 85%;
  background: #cdcdcd;
}

/* File list */
.files {
  flex: 1;
  padding-left: 28px;
}
table {
  width: 1191px;
  table-layout: fixed;
  border-collapse: collapse;
}
.c-name { width: 655px; }
.c-date { width: 203px; }
.c-type { width: 203px; }
.c-size { width: 130px; }
th {
  position: relative;
  height: 49px;
  padding: 8px 0 0 10px;
  font-weight: inherit;
  text-align: left;
  vertical-align: top;
  color: #3c506a;
}
th:first-child {
  padding-left: 5px;
}
th::after {
  content: "";
  position: absolute;
  top: 0;
  right: 0;
  width: 1px;
  height: 41px;
  background: #e3e3e3;
}
th:last-child::after {
  right: -5px;
}
.sort {
  position: absolute;
  top: 1px;
  left: 49%;
}
td {
  height: 32px;
  padding: 0 0 0 10px;
  white-space: nowrap;
  color: #595959;
}
td:first-child {
  display: flex;
  align-items: center;
  padding-left: 5px;
  color: #000;
}
td:nth-child(2) {
  font-size: 19px;
}
td:last-child {
  padding-right: 6px;
  text-align: right;
  font-size: 19px;
}
.no {
  width: 48px;
  margin-left: 7px;
  font-size: 19px;
}
.focused {
  outline: 1px solid #99c4e0;
  outline-offset: -1px;
}

.status {
  height: 35px;
  padding: 5px 0 0 22px;
  color: #1e395b;
}

/* Input method bar */
.ime {
  position: absolute;
  right: 0;
  bottom: 1px;
  display: flex;
  align-items: flex-end;
}
.ime-logo {
  position: relative;
  margin-right: -14px;
}
.ime-tools {
  width: 280px;
  height: 37px;
  padding: 0 6px 0 20px;
  display: flex;
  align-items: center;
  justify-content: space-between;
  background: #fbfcff;
  border: 1px solid #8fbbe4;
}
.ime-zh {
  color: #1d74c8;
  font-size: 22px;
  font-weight: bold;
}

/* Taskbar */
.taskbar {
  height: 60px;
  display: flex;
  color: #fff;
  background:
    linear-gradient(90deg, #000 56%, transparent 64%),
    repeating-linear-gradient(62deg, #070802 0 5px, #1f200a 7px 8px, #070802 10px);
}
.start {
  width: 72px;
  padding-left: 23px;
}
.cortana {
  width: 516px;
  display: flex;
  align-items: center;
  padding: 0 22px 0 13px;
  gap: 7px;
  background: #333;
  font-size: 22px;
}
.cortana input::placeholder {
  color: #a8a8a8;
}
.apps {
  display: flex;
}
.app {
  width: 75px;
  display: flex;
  align-items: center;
  justify-content: center;
}
.app.current {
  background: linear-gradient(#4a4a4a 57px, #86b9e6 57px);
}
.app.open {
  background: linear-gradient(#86b9e6, #86b9e6) center bottom / 61px 3px no-repeat;
}
.tray {
  margin-left: auto;
  display: flex;
  align-items: center;
  padding-right: 6px;
}
.tray::after {
  content: "";
  width: 1px;
  height: 60px;
  background: #555;
}
.tray-zh {
  width: 36px;
  text-align: center;
  font-size: 20px;
  font-weight: 500;
}
.tray-sogou {
  margin: 0 1px 0 14px;
}
.clock {
  width: 144px;
  display: flex;
  flex-direction: column;
  align-items: center;
  font-size: 20px;
  line-height: 28px;
}
.notice {
  position: relative;
  width: 56px;
  height: 60px;
  padding: 14px 0 0 3px;
  margin-right: 2px;
  display: flex;
}
.count {
  position: absolute;
  left: 14px;
  top: 28px;
  width: 24px;
  height: 24px;
  border-radius: 50%;
  border: 1px solid #777;
  background: #2c2c2c;
  font-size: 16px;
  font-weight: bold;
  line-height: 22px;
}
```
